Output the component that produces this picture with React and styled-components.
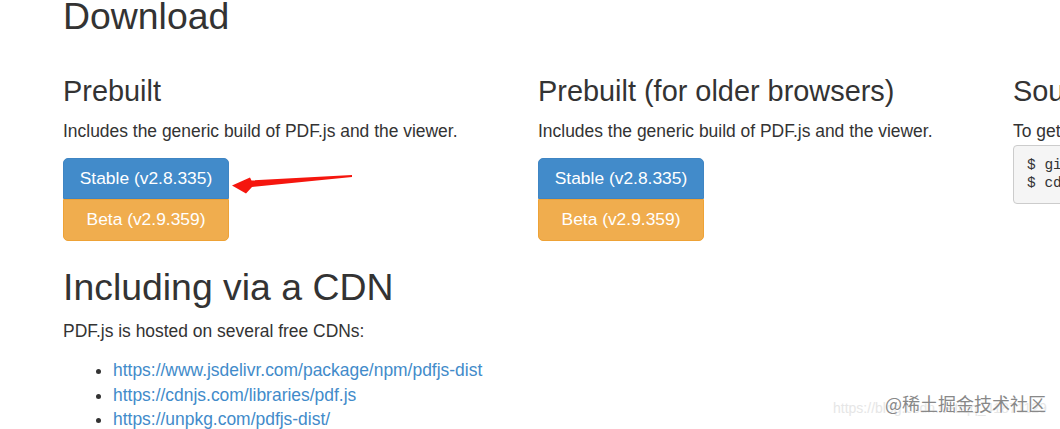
import React from 'react';
import styled, { createGlobalStyle } from 'styled-components';

const GlobalStyle = createGlobalStyle`
  html, body {
    margin: 0;
    padding: 0;
    background: #fff;
    overflow: hidden;
  }
  body {
    font-family: "Liberation Sans", Arial, sans-serif;
    color: #333;
  }
`

const Page = styled.div`
  position: relative;
  width: 1060px;
  height: 429px;
  padding-left: 63px;
  box-sizing: border-box;
  overflow: hidden;
`

const Title = styled.h1`
  margin: ${props => props.first ? '-4px' : '26px'} 0 0 0;
  font-size: 37.4px;
  line-height: 40.5px;
  font-weight: 400;
  color: #333;
  white-space: nowrap;
`

const Columns = styled.div`
  display: grid;
  grid-template-columns: repeat(3, 445px);
  column-gap: 30px;
`

const Column = styled.div`
  display: flex;
  flex-direction: column;
  align-items: flex-start;
  min-width: 0;
`

const SubTitle = styled.h2`
  margin: 39px 0 0 0;
  font-size: 28.9px;
  line-height: 31.6px;
  font-weight: 400;
  color: #333;
  white-space: nowrap;
`

const Text = styled.p`
  margin: 11.5px 0 0 0;
  font-size: 17.45px;
  line-height: 24.7px;
  white-space: nowrap;
`

const ButtonGroup = styled.div`
  display: flex;
  flex-direction: column;
  width: 166px;
  margin-top: 14.3px;
`

const Btn = styled.a`
  display: flex;
  align-items: center;
  justify-content: center;
  height: 41.5px;
  box-sizing: border-box;
  font-size: 17.4px;
  color: #fff;
  text-decoration: none;
  background: ${props => props.variant === 'warning' ? '#f0ad4e' : '#428bca'};
  border: 1px solid ${props => props.variant === 'warning' ? '#eea236' : '#3f85c3'};
  border-radius: ${props => props.variant === 'warning' ? '0 0 5px 5px' : '5px 5px 0 0'};
  cursor: pointer;
`

const Pre = styled.pre`
  margin: 2px 0 0 0;
  padding: 11px 13px;
  width: 445px;
  box-sizing: border-box;
  background: #f5f5f5;
  border: 1px solid #ccc;
  border-radius: 4px;
  font-family: "Liberation Mono", "DejaVu Sans Mono", monospace;
  font-size: 14.5px;
  line-height: 17.5px;
  color: #333;
`

const LinkList = styled.ul`
  margin: 14.7px 0 0 0;
  padding-left: 50px;
  font-size: 17.45px;
  line-height: 24.7px;

  li::marker {
    color: #333;
  }
`

const Link = styled.a`
  color: #428bca;
  text-decoration: none;
  white-space: nowrap;
`

const Arrow = styled.svg`
  position: absolute;
  left: 225px;
  top: 170px;
`

const Watermark = styled.div`
  position: absolute;
  left: 833px;
  top: 390px;
  width: 230px;
  height: 30px;
  pointer-events: none;
`

const FaintUrl = styled.span`
  position: absolute;
  left: 0;
  top: 10px;
  font-size: 14px;
  color: #e6e6e6;
  white-space: nowrap;
`

const Mark = styled.span`
  position: absolute;
  left: 52px;
  top: 0;
  font-family: "Noto Sans CJK SC", "Liberation Sans", sans-serif;
  font-size: 18px;
  line-height: 26px;
  color: #888;
  white-space: nowrap;
  text-shadow: 0 0 2px #fff, 0 0 1px #fff;
`

const downloads = [
  { title: 'Prebuilt' },
  { title: 'Prebuilt (for older browsers)' },
]

const cdns = [
  'https://www.jsdelivr.com/package/npm/pdfjs-dist',
  'https://cdnjs.com/libraries/pdf.js',
  'https://unpkg.com/pdfjs-dist/',
]

export default function App() {
  return (
    <Page>
      <GlobalStyle />
      <Title first>Download</Title>
      <Columns>
        {downloads.map(d => (
          <Column key={d.title}>
            <SubTitle>{d.title}</SubTitle>
            <Text>Includes the generic build of PDF.js and the viewer.</Text>
            <ButtonGroup>
              <Btn variant="primary">Stable (v2.8.335)</Btn>
              <Btn variant="warning">Beta (v2.9.359)</Btn>
            </ButtonGroup>
          </Column>
        ))}
        <Column>
          <SubTitle>Source code</SubTitle>
          <Text>To get a local copy of the current code, clone it using git:</Text>
          <Pre>{'$ git clone https://github.com/mozilla/pdf.js.git\n$ cd pdf.js'}</Pre>
        </Column>
      </Columns>

      <Title>Including via a CDN</Title>
      <Text>PDF.js is hosted on several free CDNs:</Text>
      <LinkList>
        {cdns.map(url => (
          <li key={url}><Link href={url}>{url}</Link></li>
        ))}
      </LinkList>

      <Arrow width="135" height="30" viewBox="0 0 135 30">
        <polygon
          points="7,15.5 25,7.5 26.5,10.5 127,5 127,7 27,17 21,23.5"
          fill="#f5160e"
        />
      </Arrow>

      <Watermark>
        <FaintUrl>https://blog.csdn.net/qq_41871129</FaintUrl>
        <Mark>@稀土掘金技术社区</Mark>
      </Watermark>
    </Page>
  )
}
